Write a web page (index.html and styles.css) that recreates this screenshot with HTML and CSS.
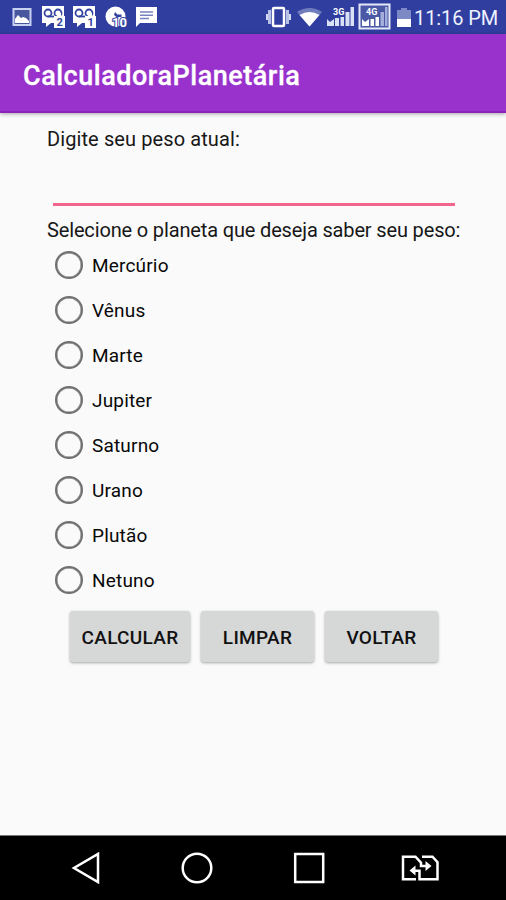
FILE: index.html
```html
<!DOCTYPE html>
<html lang="pt-BR">
<head>
<meta charset="utf-8">
<title>CalculadoraPlanetária</title>
<link rel="stylesheet" href="styles.css">
</head>
<body>
<header class="status">
  <div class="notifications">
    <svg width="20" height="22" viewBox="0 0 20 22"><path d="M1.500 3h17v16h-17z" fill="#48579e" stroke="#c8d1ef" stroke-width="2"/><path d="M3 17v-4l3-4 3 3 2-1 3 1 3 3v2z" fill="#fff"/></svg>
    <svg class="n2" width="25" height="24" viewBox="0 0 25 24"><path d="M1 1h22v17H10l-5 4v-4H1z" fill="#fff"/><g fill="none" stroke="#3443a0" stroke-width="1.8"><circle cx="7" cy="8" r="3.500"/><circle cx="17" cy="8" r="3.500"/><path d="M7 11.500h6"/></g><path d="M13 11h3V8h4v3h4v12H13z" fill="#fff"/><text x="15.500" y="21" class="badge">2</text></svg>
    <svg class="n3" width="25" height="24" viewBox="0 0 25 24"><path d="M1 1h22v17H10l-5 4v-4H1z" fill="#fff"/><g fill="none" stroke="#3443a0" stroke-width="1.8"><circle cx="7" cy="8" r="3.500"/><circle cx="17" cy="8" r="3.500"/><path d="M7 11.500h6"/></g><path d="M13 11h3V8h4v3h4v12H13z" fill="#fff"/><text x="15.500" y="21" class="badge">1</text></svg>
    <svg class="n4" width="23" height="24" viewBox="0 0 23 24"><circle cx="10.500" cy="11.500" r="10" fill="#fff"/><path d="M10 7l2.500 2.500h4V12h-5L9 10z" fill="#3443a0"/><text x="7" y="21.500" class="ten">10</text></svg>
    <svg class="n5" width="23" height="22" viewBox="0 0 23 22"><path d="M1 1h21v16H5l-4 4z" fill="#fff"/><path d="M5 6h13M5 9.300h13M5 12.600h9" stroke="#7782bf" stroke-width="1.5"/></svg>
  </div>
  <div class="system">
    <svg width="27" height="24" viewBox="0 0 27 24"><rect x="8" y="3" width="11" height="18" rx="1" fill="none" stroke="#fff" stroke-width="2.500"/><path d="M4.500 5v14M22.500 5v14" stroke="#b7c1e5" stroke-width="3"/><path d="M2 9v6M25 9v6" stroke="#d1d8f0" stroke-width="2"/></svg>
    <svg class="wifi" width="25" height="24" viewBox="0 0 25 24"><path d="M0 7Q12.500 -1 25 7L12.500 21.500z" fill="#707dbd"/><path d="M2.500 10Q12.500 4 22.500 10L12.500 21.500z" fill="#fff"/></svg>
    <svg class="sig" width="29" height="24" viewBox="0 0 29 24"><path d="M1 21v-7l3 3 4-3v7zM9 21v-8h4v8zM14.500 21v-9h3.500v9zM19.500 21V7h4v14zM24.500 21V2h3.500v19z" fill="#dbe1f5"/><text x="7" y="10" class="net">3G</text></svg>
    <svg class="boxed" width="33" height="28" viewBox="0 0 33 28"><rect x="1.500" y="1.500" width="30" height="24" fill="#4a58a5" stroke="#e4e8f8" stroke-width="2"/><path d="M4 23v-7l3 3 4-3v7zM12.500 23v-7h3.500v7zM17.500 23v-9h3.500v9z" fill="#fff"/><path d="M22.500 23V9H26v14zM27 23V4h2.500v19z" fill="#a5aeda"/><text x="8" y="12" class="net">4G</text></svg>
    <svg class="battery" width="14" height="22" viewBox="0 0 14 22"><path d="M0 4h4V2h6v2h4v10H0z" fill="#7d89c4"/><path d="M0 13h14v8H0z" fill="#fff"/></svg>
    <span class="clock">11:16 PM</span>
  </div>
</header>
<div class="appbar"><h1>CalculadoraPlanetária</h1></div>
<main>
  <label class="prompt" for="peso">Digite seu peso atual:</label>
  <input class="weight" id="peso" type="text">
  <p class="question">Selecione o planeta que deseja saber seu peso:</p>
  <div class="planets">
    <label><input type="radio" name="planeta"><span>Mercúrio</span></label>
    <label><input type="radio" name="planeta"><span>Vênus</span></label>
    <label><input type="radio" name="planeta"><span>Marte</span></label>
    <label><input type="radio" name="planeta"><span>Jupiter</span></label>
    <label><input type="radio" name="planeta"><span>Saturno</span></label>
    <label><input type="radio" name="planeta"><span>Urano</span></label>
    <label><input type="radio" name="planeta"><span>Plutão</span></label>
    <label><input type="radio" name="planeta"><span>Netuno</span></label>
  </div>
  <div class="actions">
    <button class="wide">CALCULAR</button>
    <button>LIMPAR</button>
    <button>VOLTAR</button>
  </div>
</main>
<nav>
  <svg width="32" height="34" viewBox="0 0 32 34"><path d="M27 3v28L3 17z"/></svg>
  <svg width="34" height="34" viewBox="0 0 34 34"><circle cx="17" cy="17" r="14.300"/></svg>
  <svg width="34" height="34" viewBox="0 0 34 34"><path d="M3.200 3h28v28h-28z"/></svg>
  <svg class="swap" width="40" height="30" viewBox="0 0 40 30"><path d="M16 26.300H3V3.700h12.500l5.500 6v3.300h6M22 3.700h10.500l5 5.500v17.100H19.500v-8.500H14"/><path class="tip" d="M25.500 8l6 5-6 5zM15.500 12.500L9.500 17.500l6 5z"/></svg>
</nav>
</body>
</html>
```
FILE: styles.css
```css
* { box-sizing: border-box; }
body {
  margin: 0;
  width: 506px;
  height: 900px;
  display: flex;
  flex-direction: column;
  overflow: hidden;
  background: #fafafa;
  color: #171717;
  font-family: Roboto, sans-serif;
}
svg { display: block; flex: none; }
.status {
  height: 34px;
  flex: none;
  display: flex;
  justify-content: space-between;
  padding: 0 9px 0 12px;
  background: #303f9f;
}
.notifications, .system { display: flex; align-items: center; }
.n2 { margin-left: 9px; }
.n3 { margin-left: 6px; }
.n4 { margin-left: 8px; }
.n5 { margin-left: 7px; }
.wifi { margin-left: 5px; }
.sig { margin-left: 4px; }
.boxed { margin-left: 3px; }
.battery { margin: 0 3px 0 6px; }
.badge { font: bold 11px Roboto, sans-serif; fill: #3443a0; }
.ten { font: bold 13px Roboto, sans-serif; fill: #fff; stroke: #3443a0; stroke-width: 2px; paint-order: stroke; }
.net { font: bold 9px Roboto, sans-serif; fill: #fff; }
.clock { width: 83px; font-size: 20px; letter-spacing: -0.1px; white-space: nowrap; color: #eef1ff; padding-top: 2px; }
.appbar {
  height: 79px;
  flex: none;
  display: flex;
  align-items: center;
  padding: 7px 23px 0;
  background: #9932cc;
  border-bottom: 2px solid #8c22bd;
  box-shadow: 0 1px 4px rgba(0, 0, 0, .35);
}
h1 { margin: 0; color: #fff; font-size: 27px; font-weight: 500; line-height: 32px; letter-spacing: 0.52px; -webkit-text-stroke: 0.3px #fff; }
main { flex: 1; display: flex; flex-direction: column; padding: 14px 46px 0 47px; }
.prompt, .question { font-size: 20px; line-height: 24px; white-space: nowrap; }
.prompt { height: 24px; letter-spacing: 0.1px; }
.weight {
  width: 402px;
  height: 43px;
  margin: 12px 0 0 6px;
  padding: 0;
  border: 0;
  border-bottom: 3px solid #f4658e;
  background: transparent;
  font: 20px Roboto, sans-serif;
  outline: 0;
}
.question { margin: 12px 0 0; letter-spacing: -0.15px; }
.planets { display: flex; flex-direction: column; }
.planets label { height: 45px; display: flex; align-items: center; gap: 9px; padding-left: 8px; font-size: 19px; letter-spacing: 0.18px; color: #080808; }
.planets input {
  appearance: none;
  width: 28px;
  height: 28px;
  margin: 0;
  border: 2px solid #707070;
  box-shadow: inset 0 0 0 0.5px #707070;
  border-radius: 50%;
}
.planets span { padding-top: 2px; }
.actions { display: flex; gap: 11px; margin: 9px 0 0 23px; }
button {
  width: 113px;
  height: 51px;
  padding: 2px 0 0;
  border: 0;
  border-radius: 3px;
  background: #d6d7d7;
  box-shadow: 0 1px 3px rgba(0, 0, 0, .35);
  font: 500 19px Roboto, sans-serif;
  letter-spacing: 0.3px;
  color: #111;
}
.wide { width: 120px; }
nav {
  height: 65px;
  flex: none;
  display: flex;
  align-items: center;
  padding-left: 71px;
  background: #000;
  border-top: 1px solid #777;
}
nav svg { fill: none; stroke: #fff; stroke-width: 2.5; }
nav svg + svg { margin-left: 78px; }
nav svg:first-child + svg { margin-left: 77px; }
nav .swap { margin-left: 74px; }
nav .tip { fill: #fff; stroke: none; }
```
